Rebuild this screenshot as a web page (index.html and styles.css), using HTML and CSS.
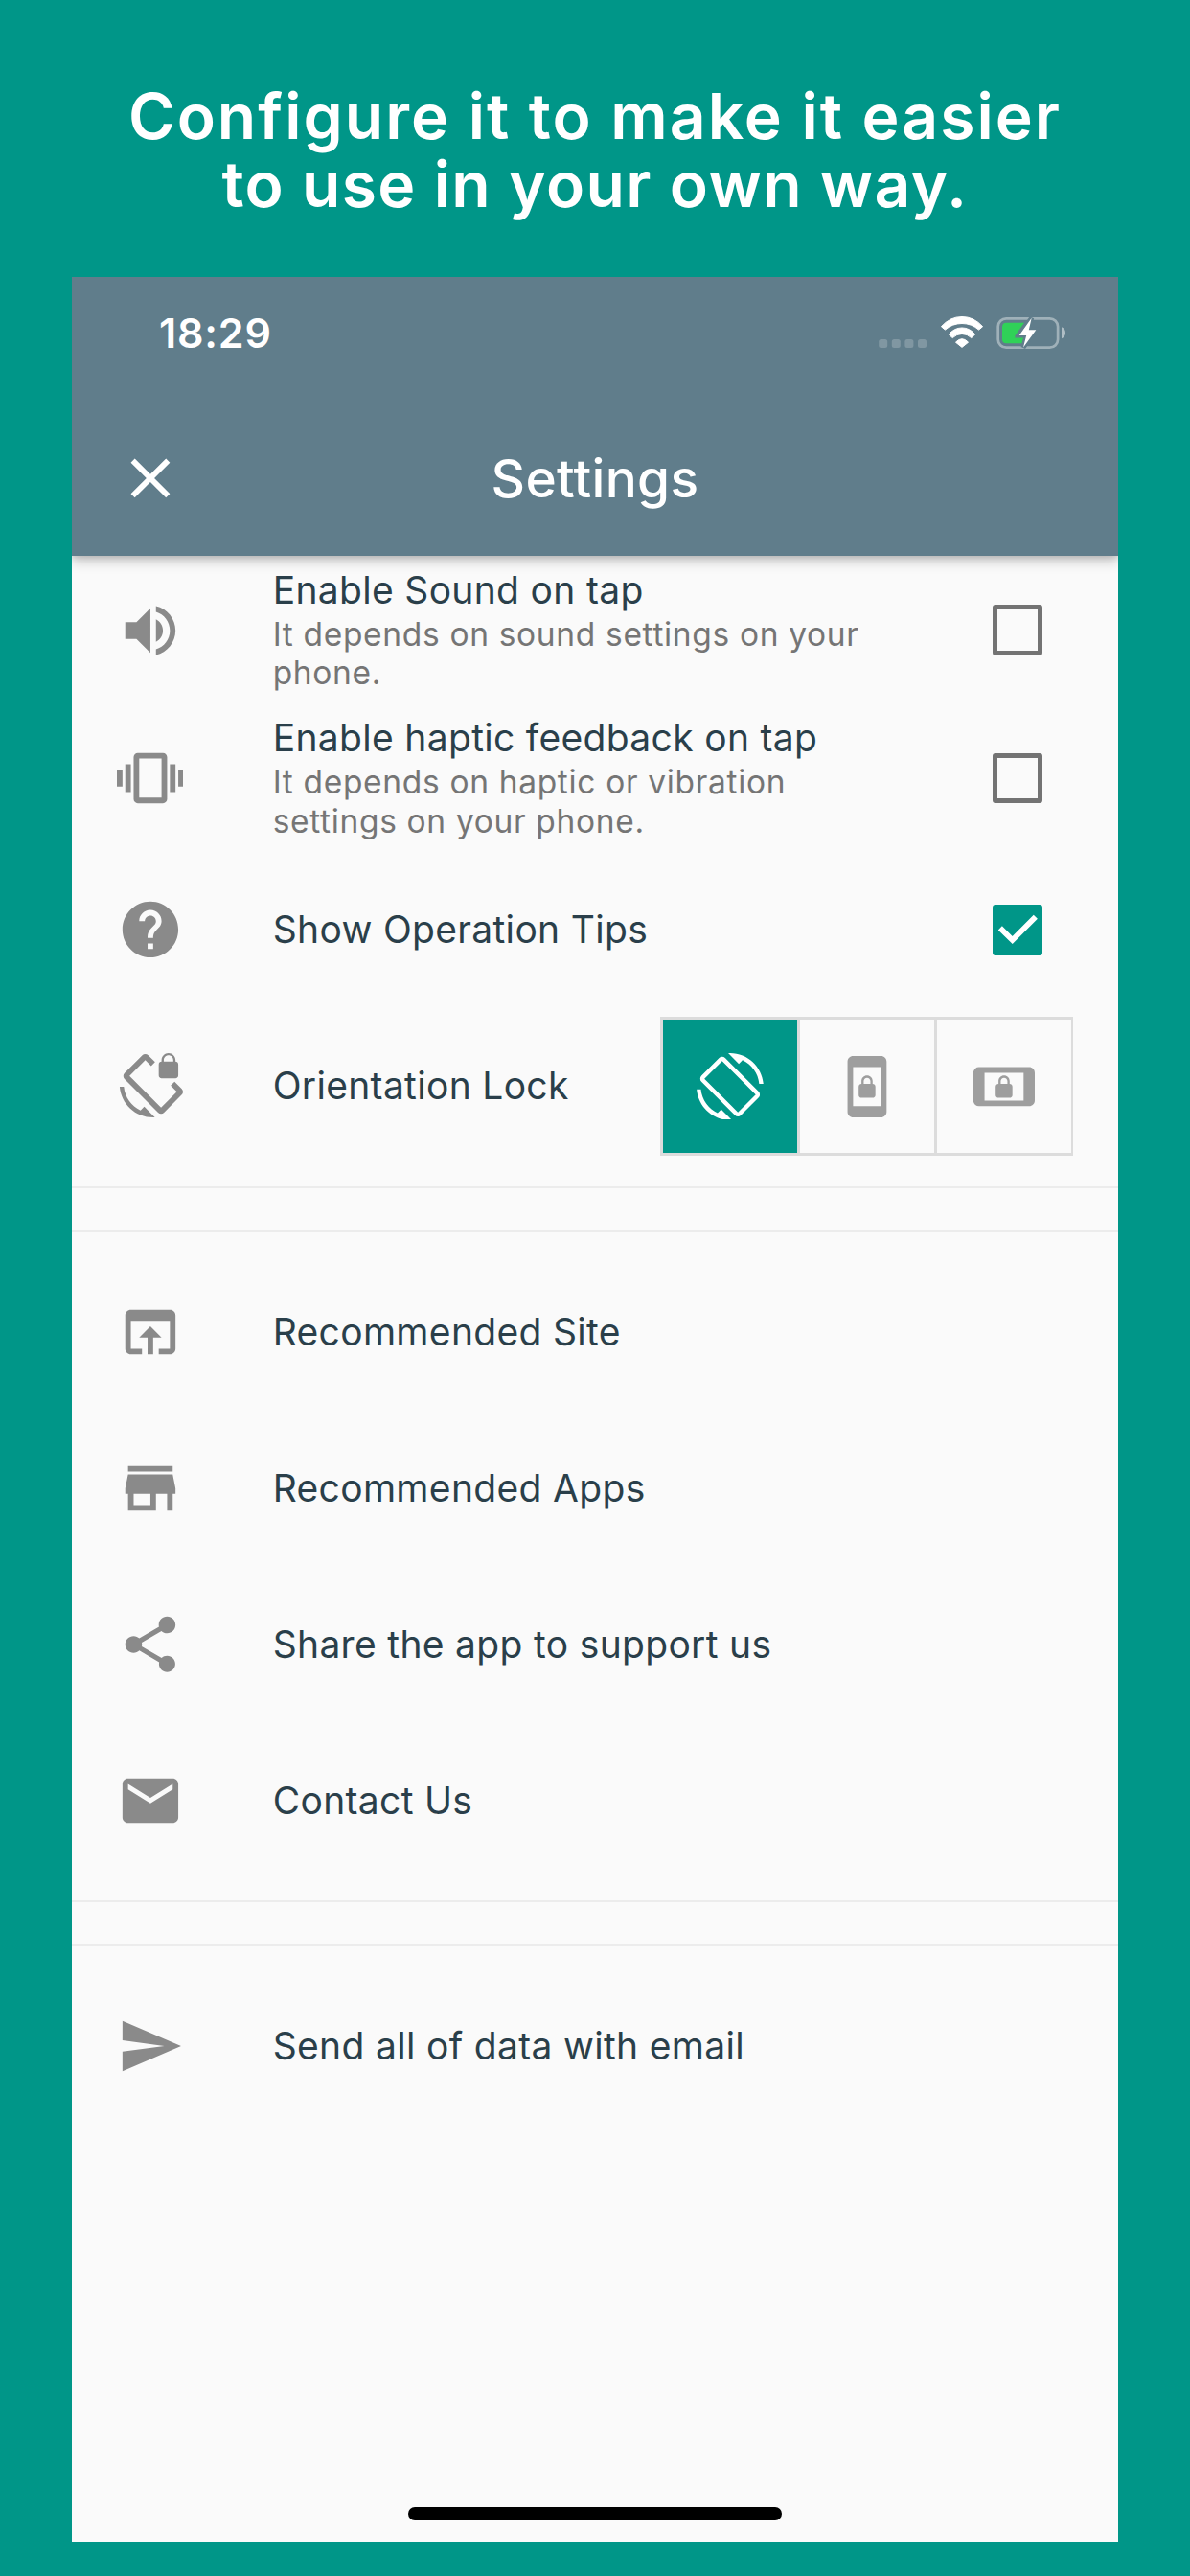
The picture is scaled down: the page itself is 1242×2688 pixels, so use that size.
FILE: index.html
```html
<!DOCTYPE html>
<html lang="en">
<head>
    <meta charset="UTF-8">
    <meta name="viewport" content="width=device-width, initial-scale=1.0">
    <title>Settings</title>
    <link rel="stylesheet" href="styles.css">
</head>
<body>
    <h1 class="headline">
        <span class="line-one">Configure it to make it easier</span>
        <span class="line-two">to use in your own way.</span>
    </h1>

    <div class="phone">
        <header class="app-header">
            <div class="status-bar">
                <span class="time">18:29</span>
                <svg class="status-icons" viewBox="0 0 196 36">
                    <!-- signal -->
                    <g fill="#fff" opacity="0.2">
                        <rect x="0.2" y="25" width="9" height="9" rx="2.5"/>
                        <rect x="13.8" y="25" width="9" height="9" rx="2.5"/>
                        <rect x="27.4" y="25" width="9" height="9" rx="2.5"/>
                        <rect x="41" y="25" width="9" height="9" rx="2.5"/>
                    </g>
                    <!-- wifi -->
                    <g fill="#fff" stroke="#fff" stroke-width="1" stroke-linejoin="round">
                        <path d="M65.4 11.7Q74.5 1.5 87 1.5T108.6 11.7L104.6 15.1Q97 8.5 87 8.5T69.4 15.1Z"/>
                        <path d="M73.2 19.9Q79 13 87 13T100.8 19.9L96.8 23.6Q92.5 19.5 87 19.5T77.2 23.6Z"/>
                        <path d="M80.5 28.2Q83.5 24.7 87 24.7T93.5 28.2L87 33.4Z"/>
                    </g>
                    <!-- battery -->
                    <rect x="124.7" y="3.3" width="62.4" height="30.4" rx="8.5" fill="none" stroke="#fff" stroke-width="2.7" opacity="0.4"/>
                    <path d="M191 12.3Q195 14 195 18.2T191 24.2Z" fill="#fff" opacity="0.5"/>
                    <path d="M133.5 7.7H152L142 22H152L149.7 29.3H133.5Q129 29.3 129 25V12Q129 7.7 133.5 7.7Z" fill="#30d158"/>
                    <path class="bolt" d="M159.7 2.7L146.7 20.9H154.2L151 33.6L164.3 15.3H156.8Z"/>
                    <path d="M159.7 2.7L146.7 20.9H154.2L151 33.6L164.3 15.3H156.8Z" fill="#fff"/>
                </svg>
            </div>
            <div class="title-bar">
                <svg class="icon" viewBox="0 0 24 24"><path d="M19 6.41L17.59 5 12 10.59 6.41 5 5 6.41 10.59 12 5 17.59 6.41 19 12 13.41 17.59 19 19 17.59 13.41 12z"/></svg>
                <h2>Settings</h2>
            </div>
        </header>

        <main>
            <div class="row two-line">
                <svg class="icon" viewBox="0 0 24 24"><path d="M3 9v6h4l5 5V4L7 9H3zm13.5 3c0-1.77-1.02-3.29-2.5-4.03v8.05c1.48-.73 2.5-2.25 2.5-4.02zM14 3.23v2.06c2.89.86 5 3.54 5 6.71s-2.11 5.85-5 6.71v2.06c4.01-.91 7-4.49 7-8.77s-2.99-7.86-7-8.77z"/></svg>
                <div class="text">
                    <p class="title">Enable Sound on tap</p>
                    <p class="subtitle">It depends on sound settings on your<br>phone.</p>
                </div>
                <span class="checkbox"></span>
            </div>
            <div class="row two-line">
                <svg class="icon" viewBox="0 0 24 24"><path d="M0 15h2V9H0v6zm3 2h2V7H3v10zm19-8v6h2V9h-2zm-3 8h2V7h-2v10zM16.5 3h-9C6.67 3 6 3.67 6 4.5v15c0 .83.67 1.5 1.5 1.5h9c.83 0 1.5-.67 1.5-1.5v-15c0-.83-.67-1.5-1.5-1.5zM16 19H8V5h8v14z"/></svg>
                <div class="text">
                    <p class="title">Enable haptic feedback on tap</p>
                    <p class="subtitle">It depends on haptic or vibration<br>settings on your phone.</p>
                </div>
                <span class="checkbox"></span>
            </div>
            <div class="row">
                <svg class="icon" viewBox="0 0 24 24"><path d="M12 2C6.48 2 2 6.48 2 12s4.48 10 10 10 10-4.48 10-10S17.52 2 12 2zm1 17h-2v-2h2v2zm2.07-7.75l-.9.92C13.45 12.9 13 13.5 13 15h-2v-.5c0-1.1.45-2.1 1.17-2.83l1.24-1.26c.37-.36.59-.86.59-1.41 0-1.1-.9-2-2-2s-2 .9-2 2H8c0-2.21 1.79-4 4-4s4 1.79 4 4c0 .88-.36 1.68-.93 2.25z"/></svg>
                <p class="title">Show Operation Tips</p>
                <span class="checkbox checked">
                    <svg viewBox="0 0 18 18"><path d="M2.7 8.4L7.1 12.7L15.4 4.4" fill="none" stroke="#fff" stroke-width="2"/></svg>
                </span>
            </div>
            <div class="row">
                <svg class="icon" viewBox="0 0 24 24"><path d="M23.25 12.77l-2.57-2.57-1.41 1.41 2.22 2.22-5.66 5.66L4.51 8.17l5.66-5.66 2.1 2.1 1.41-1.41L11.23.75c-.59-.59-1.54-.59-2.12 0L2.75 7.11c-.59.59-.59 1.54 0 2.12l12.02 12.02c.59.59 1.54.59 2.12 0l6.36-6.36c.59-.59.59-1.54 0-2.12zM8.47 20.48C5.2 18.94 2.86 15.76 2.5 12H1c.51 6.16 5.66 11 11.95 11l.66-.03-3.81-3.82-1.33 1.33zM16 9h5c.55 0 1-.45 1-1V4c0-.55-.45-1-1-1v-.5C21 1.12 19.88 0 18.5 0S16 1.12 16 2.5V3c-.55 0-1 .45-1 1v4c0 .55.45 1 1 1zm.8-6.5c0-.94.76-1.7 1.7-1.7s1.7.76 1.7 1.7V3h-3.4v-.5z"/></svg>
                <p class="title">Orientation Lock</p>
                <div class="toggle">
                    <div class="option active">
                        <svg class="icon" viewBox="0 0 24 24"><path d="M16.48 2.52c3.27 1.55 5.61 4.72 5.97 8.48h1.5C23.44 4.84 18.29 0 12 0l-.66.03 3.81 3.81 1.33-1.32zm-6.25-.77c-.59-.59-1.54-.59-2.12 0L1.75 8.11c-.59.59-.59 1.54 0 2.12l12.02 12.02c.59.59 1.54.59 2.12 0l6.36-6.36c.59-.59.59-1.54 0-2.12L10.23 1.75zm4.6 19.44L2.81 9.17l6.36-6.36 12.02 12.02-6.36 6.36zm-7.31.29C4.25 19.94 1.91 16.76 1.55 13H.05C.56 19.16 5.71 24 12 24l.66-.03-3.81-3.81-1.33 1.32z"/></svg>
                    </div>
                    <div class="option">
                        <svg class="icon" viewBox="0 0 24 24"><path d="M10 16h4c.55 0 1-.45 1-1v-3c0-.55-.45-1-1-1v-1c0-1.11-.9-2-2-2-1.11 0-2 .9-2 2v1c-.55 0-1 .45-1 1v3c0 .55.45 1 1 1zm.8-6c0-.66.54-1.2 1.2-1.2s1.2.54 1.2 1.2v1h-2.4v-1zM17 1H7c-1.1 0-2 .9-2 2v18c0 1.1.9 2 2 2h10c1.1 0 2-.9 2-2V3c0-1.1-.9-2-2-2zm0 18H7V5h10v14z"/></svg>
                    </div>
                    <div class="option">
                        <svg class="icon" viewBox="0 0 24 24"><path d="M21 5H3c-1.1 0-2 .9-2 2v10c0 1.1.9 2 2 2h18c1.1 0 2-.9 2-2V7c0-1.1-.9-2-2-2zm-2 12H5V7h14v10zm-9-1h4c.55 0 1-.45 1-1v-3c0-.55-.45-1-1-1v-1c0-1.11-.9-2-2-2-1.11 0-2 .9-2 2v1c-.55 0-1 .45-1 1v3c0 .55.45 1 1 1zm.8-6c0-.66.54-1.2 1.2-1.2s1.2.54 1.2 1.2v1h-2.4v-1z"/></svg>
                    </div>
                </div>
            </div>

            <div class="divider"></div>

            <div class="row">
                <svg class="icon" viewBox="0 0 24 24"><path d="M19 4H5c-1.11 0-2 .9-2 2v12c0 1.1.89 2 2 2h4v-2H5V8h14v10h-4v2h4c1.1 0 2-.9 2-2V6c0-1.1-.89-2-2-2zm-7 6l-4 4h3v6h2v-6h3l-4-4z"/></svg>
                <p class="title">Recommended Site</p>
            </div>
            <div class="row">
                <svg class="icon" viewBox="0 0 24 24"><path d="M20 4H4v2h16V4zm1 10v-2l-1-5H4l-1 5v2h1v6h10v-6h4v6h2v-6h1zm-9 4H6v-4h6v4z"/></svg>
                <p class="title">Recommended Apps</p>
            </div>
            <div class="row">
                <svg class="icon" viewBox="0 0 24 24"><path d="M18 16.08c-.76 0-1.44.3-1.96.77L8.91 12.7c.05-.23.09-.46.09-.7s-.04-.47-.09-.7l7.05-4.11c.54.5 1.25.81 2.04.81 1.66 0 3-1.34 3-3s-1.34-3-3-3-3 1.34-3 3c0 .24.04.47.09.7L8.04 9.81C7.5 9.31 6.79 9 6 9c-1.66 0-3 1.34-3 3s1.34 3 3 3c.79 0 1.5-.31 2.04-.81l7.12 4.16c-.05.21-.08.43-.08.65 0 1.61 1.31 2.92 2.92 2.92s2.92-1.31 2.92-2.92-1.31-2.92-2.92-2.92z"/></svg>
                <p class="title">Share the app to support us</p>
            </div>
            <div class="row">
                <svg class="icon" viewBox="0 0 24 24"><path d="M20 4H4c-1.1 0-1.99.9-1.99 2L2 18c0 1.1.9 2 2 2h16c1.1 0 2-.9 2-2V6c0-1.1-.9-2-2-2zm0 4l-8 5-8-5V6l8 5 8-5v2z"/></svg>
                <p class="title">Contact Us</p>
            </div>

            <div class="divider"></div>

            <div class="row">
                <svg class="icon" viewBox="0 0 24 24"><path d="M2.01 21L23 12 2.01 3 2 10l15 2-15 2z"/></svg>
                <p class="title">Send all of data with email</p>
            </div>
        </main>

        <div class="home-bar"></div>
    </div>
</body>
</html>
```
FILE: styles.css
```css
* {
    box-sizing: border-box;
    margin: 0;
    padding: 0;
}

body {
    font-family: 'Inter', 'Liberation Sans', sans-serif;
    background: #009688;
    height: 2688px;
    padding: 86px 75px 0;
    overflow: hidden;
}

.headline {
    height: 203px;
    color: #fff;
    font-size: 66px;
    font-weight: 600;
    line-height: 71px;
    text-align: center;
    white-space: nowrap;
}

.headline span {
    display: block;
}

.line-one {
    letter-spacing: 2px;
}

.line-two {
    letter-spacing: 1.35px;
}

.phone {
    display: flex;
    flex-direction: column;
    height: 2364px;
    background: #fafafa;
    overflow: hidden;
}

.app-header {
    flex: none;
    height: 291.3px;
    background: #607d8b;
    color: #fff;
    box-shadow: 0 6px 12px rgba(0, 0, 0, 0.2), 0 2px 6px rgba(0, 0, 0, 0.12);
    z-index: 1;
}

.status-bar {
    display: flex;
    align-items: center;
    justify-content: space-between;
    height: 116px;
    padding: 0 54px 0 91px;
}

.time {
    font-size: 43px;
    font-weight: 600;
    letter-spacing: 0.8px;
}

.status-icons {
    width: 196px;
    height: 36px;
}

.bolt {
    fill: #607d8b;
    stroke: #607d8b;
    stroke-width: 5;
}

.title-bar {
    display: grid;
    grid-template-columns: 70px 1fr 70px;
    align-items: center;
    height: 188px;
    padding: 0 46.6px;
}

.title-bar h2 {
    font-size: 55px;
    font-weight: 500;
    letter-spacing: 0.3px;
    text-align: center;
}

.icon {
    flex: none;
    width: 69.9px;
    height: 69.9px;
    fill: currentColor;
}

main {
    flex: 1;
    color: #8a8a8a;
}

.row {
    display: flex;
    align-items: center;
    height: 163.07px;
    padding: 0 46.6px;
    white-space: nowrap;
}

.row > .icon {
    margin-right: 93.2px;
}

.two-line {
    height: 154.3px;
}

.title {
    color: #2a3f4a;
    font-size: 39px;
    line-height: 50px;
    letter-spacing: 0.32px;
}

.text .title {
    margin: -1px 0 1px;
}

.subtitle {
    color: #757575;
    font-size: 33.5px;
    line-height: 40.8px;
    letter-spacing: 0.67px;
}

.checkbox {
    width: 52.4px;
    height: 52.4px;
    margin: 0 32px 0 auto;
    border: 5.8px solid #737373;
    border-radius: 3px;
}

.checkbox.checked {
    border: none;
    background: #009688;
}

.checkbox svg {
    display: block;
}

.toggle {
    display: flex;
    gap: 2.9px;
    margin-left: auto;
    padding: 2.9px;
    background: #dcdcdc;
}

.option {
    display: flex;
    align-items: center;
    justify-content: center;
    width: 139.8px;
    height: 139.8px;
    background: #fafafa;
    color: #9e9e9e;
}

.option.active {
    background: #009688;
    color: #fff;
}

.divider {
    height: 48px;
    margin: 22.6px 0;
    border-top: 2px solid #ececec;
    border-bottom: 2px solid #ececec;
}

.home-bar {
    flex: none;
    width: 390px;
    height: 14.5px;
    margin: 0 auto 23px;
    border-radius: 8px;
    background: #000;
}
```
